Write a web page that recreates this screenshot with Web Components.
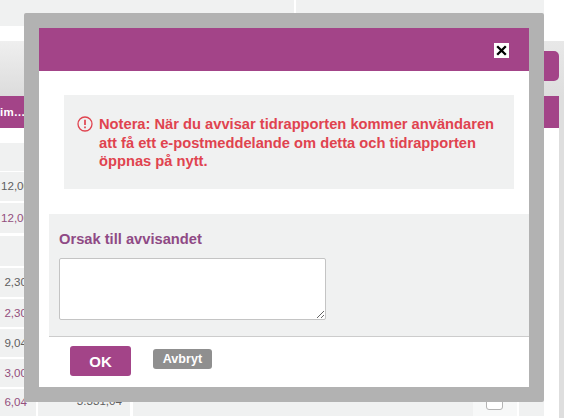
<!DOCTYPE html>
<html lang="sv"><head><meta charset="utf-8"><title>Avvisa</title>
<style>
html,body{margin:0;padding:0;background:#fff;height:418px;overflow:hidden}
body{position:relative;width:564px;font-family:"Liberation Sans",Arial,sans-serif}
</style></head><body>
<time-page>
  <time-row h="28" mt="15"></time-row>
  <time-row h="29" mt="1" val="12,00" pr="6"></time-row>
  <time-row h="30" mt="2" val="12,00" pr="6" pink></time-row>
  <time-row h="30" mt="3"></time-row>
  <time-row h="29" mt="2" val="2,30"></time-row>
  <time-row h="28" mt="2" val="2,30" pink></time-row>
  <time-row h="28" mt="2" val="9,04"></time-row>
  <time-row h="28" mt="2" val="3,00" pink></time-row>
  <time-row h="27" mt="2" val="6,04" pink total="3.331,04" check></time-row>
</time-page>
<reject-dialog>
  <alert-box>Notera: När du avvisar tidrapporten kommer användaren att få ett e-postmeddelande om detta och tidrapporten öppnas på nytt.</alert-box>
  <reason-field label="Orsak till avvisandet"></reason-field>
  <action-button slot="actions" kind="primary">OK</action-button>
  <action-button slot="actions" kind="secondary">Avbryt</action-button>
</reject-dialog>
<script>
function shadow(el, html){ el.attachShadow({mode:'open'}).innerHTML = html; }

customElements.define('time-page', class extends HTMLElement{
  constructor(){ super(); shadow(this, `<style>
    :host{display:flex;width:564px;height:418px;overflow:hidden;background:#fff}
    .main{width:544px;flex:none;display:flex;flex-direction:column}
    .top{height:26px;flex:none;margin-bottom:15px;display:flex}
    .top i{display:block;height:26px;background:#f0f1f1}
    .top i:first-child{width:294px}.top i:last-child{flex:1;margin-left:2px}
    .head{height:55px;flex:none;background:linear-gradient(#efefef,#dcdcdc)}
    .band{height:32px;flex:none;background:#a34488;color:#fff;font-weight:bold;font-size:11.5px;display:flex;align-items:center;overflow:hidden;white-space:nowrap;letter-spacing:.2px}
    .side{width:20px;flex:none;display:flex;flex-direction:column}
    .side .blank{height:41px;flex:none}
    .side .shead{height:55px;flex:none;background:linear-gradient(#e8e8e8,#dedede);padding-top:10px;box-sizing:border-box}
    .pill{width:15px;height:30px;background:#a34488;border-radius:0 5px 5px 0}
    .wrap{flex:1;display:flex;min-height:0}
    .col{width:15px;flex:none;display:flex;flex-direction:column}
    .sband{height:32px;flex:none;background:#a34488}
    .rail{width:5px;flex:none;background:#dedede}
  </style>
  <div class="main">
    <div class="top"><i></i><i></i></div>
    <div class="head"></div>
    <div class="band">im…</div>
    <slot></slot>
  </div>
  <div class="side">
    <div class="blank"></div>
    <div class="shead"><div class="pill"></div></div>
    <div class="wrap"><div class="col"><div class="sband"></div></div><div class="rail"></div></div>
  </div>`); }
});

customElements.define('time-row', class extends HTMLElement{
  connectedCallback(){
    const h=this.getAttribute('h'), mt=this.getAttribute('mt');
    const pink=this.hasAttribute('pink');
    const val=this.getAttribute('val')||'', total=this.getAttribute('total')||'';
    const chk=this.hasAttribute('check');
    const pr=this.getAttribute('pr')||'9';
    shadow(this, `<style>
      :host{display:flex;height:${h}px;margin-top:${mt}px;font-size:11.6px;color:${pink?'#934f7d':'#5f5f5f'}}
      .c{background:#f0f1f1;display:flex;align-items:center;justify-content:flex-end;box-sizing:border-box;white-space:nowrap}
      .a{width:36px;padding-right:${pr}px;margin-right:2px;padding-bottom:2px}
      .b{width:92px;padding-right:8px;margin-right:3px;color:#5f5f5f;padding-bottom:4px}
      .d{width:340px}
      .e{width:44px;margin-right:2px;background:#f7f8f8;justify-content:flex-start;align-items:flex-start;padding:5px 0 0 13px}
      .f{flex:1}
      .box{width:15px;height:14px;border:1px solid #b4b4b4;border-radius:3px;background:#fff}
    </style>
    <div class="c a">${val}</div><div class="c b">${total}</div><div class="c d"></div>
    <div class="c e">${chk?'<div class="box"></div>':''}</div><div class="c f"></div>`);
  }
});

customElements.define('alert-box', class extends HTMLElement{
  constructor(){ super(); shadow(this, `<style>
    :host{display:flex;gap:6px;height:94px;box-sizing:border-box;margin:24px 15px 0 25px;padding:20px 13px 0 13px;background:#f0f1f1;color:#e0434f;font:bold 14.7px/18.5px "Liberation Sans",Arial,sans-serif}
    svg{flex:none;width:16px;height:16px;margin-top:1px}
    .t{flex:1}
  </style>
  <svg viewBox="0 0 16 16" fill="none" stroke="#e0434f"><circle cx="8" cy="8" r="7" stroke-width="1.3"/><path d="M8 3.8v5.2" stroke-width="1.7"/><path d="M8 10.6v1.7" stroke-width="1.7"/></svg>
  <div class="t"><slot></slot></div>`); }
});

customElements.define('reason-field', class extends HTMLElement{
  connectedCallback(){
    shadow(this, `<style>
      :host{display:block;height:123px;box-sizing:border-box;margin:25px 0 0 10px;padding:17px 10px 0;background:#f0f1f1;border-bottom:1px solid #ccc}
      label{display:block;font:bold 14.7px/16px "Liberation Sans",Arial,sans-serif;color:#8f4a85;margin-bottom:11px}
      textarea{display:block;box-sizing:border-box;width:267px;height:62px;margin:0;border:1px solid #c4c4c4;border-radius:2px;background:#fff;outline:none}
    </style><label for="r">${this.getAttribute('label')}</label><textarea id="r"></textarea>`);
  }
});

customElements.define('action-button', class extends HTMLElement{
  connectedCallback(){
    const p=this.getAttribute('kind')==='primary';
    shadow(this, `<style>
      :host{display:inline-flex;align-items:center;justify-content:center;box-sizing:border-box;color:#fff;font-weight:bold;font-family:"Liberation Sans",Arial,sans-serif;cursor:pointer;
        ${p?'width:61px;height:30px;background:#a34488;border-radius:3px;font-size:15px;':'width:59px;height:20px;background:#8f8f8f;border-radius:3px;font-size:12.5px;letter-spacing:.1px;margin-top:3px;'}}
    </style><slot></slot>`);
  }
});

customElements.define('reject-dialog', class extends HTMLElement{
  constructor(){ super(); shadow(this, `<style>
    :host{position:absolute;left:24px;top:13px;width:520px;height:389px;box-sizing:border-box;border:15px solid #b2b2b2;border-radius:2px;background:#fff;display:flex;flex-direction:column}
    header{height:43px;flex:none;background:#a34488;display:flex;align-items:center;justify-content:flex-end;padding-right:20px}
    .x{width:15px;height:15px;background:#fff;display:flex;margin-top:2px}
    .x svg{width:15px;height:15px}
    footer{display:flex;align-items:flex-start;gap:22px;padding:9px 0 0 31px}
  </style>
  <header><div class="x"><svg viewBox="0 0 15 15"><path d="M3.2 3.2l8.6 8.6M11.8 3.2l-8.6 8.6" stroke="#000" stroke-width="2.3" fill="none"/></svg></div></header>
  <slot></slot>
  <footer><slot name="actions"></slot></footer>`); }
});
</script>
</body></html>
